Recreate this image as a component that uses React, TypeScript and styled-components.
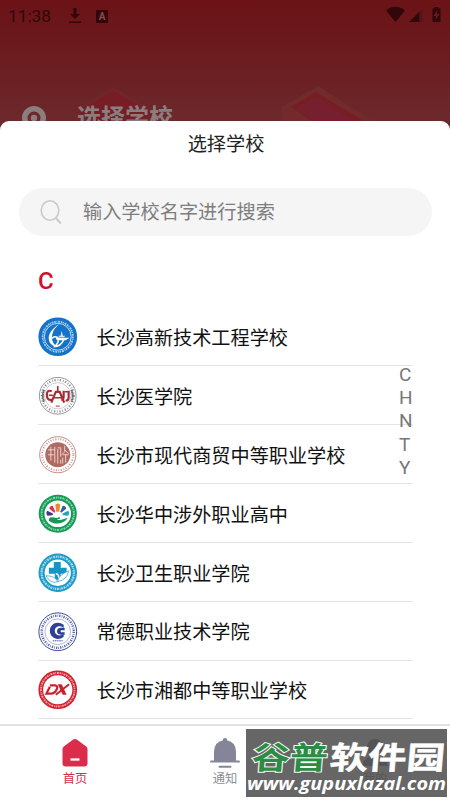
import { FC, ReactNode } from "react";
import styled, { createGlobalStyle } from "styled-components";

const GlobalStyle = createGlobalStyle`
    * {
        box-sizing: border-box;
    }

    body {
        margin: 0;
        background: #fff;
        font-family: Roboto, "Noto Sans CJK SC", sans-serif;
    }
`;

const letters = ["C", "H", "N", "T", "Y"];

interface RingProps {
    color: string;
    radius?: number;
    width?: number;
    dash?: string;
}

// The tiny lettering that runs around the edge of a school seal
const SealLettering: FC<RingProps> = ({
    color,
    radius = 16,
    width = 2.4,
    dash = "1.6 .7 .8 .9 2 .8",
}) => (
    <circle
        cx="20"
        cy="20"
        r={radius}
        fill="none"
        stroke={color}
        strokeWidth={width}
        strokeDasharray={dash}
    />
);

const EngineeringSeal = () => (
    <Seal viewBox="0 0 40 40">
        <circle cx="20" cy="20" r="19.6" fill="#1472c8" />
        <circle cx="20" cy="20" r="13.6" fill="none" stroke="#d5e8f8" strokeWidth=".9" />
        <SealLettering color="#a9cff0" radius={15.3} width={1.8} />
        <path d="M22 7C14 11 10 18 11 23c1 5 5 7 8 7-5-4-6-9-4-14 1-4 4-7 7-9z" fill="#fff" />
        <path
            d="M12 24c2-4 6-5 8-3 2 3-1 8-4 9 5 0 8-2 10-7"
            fill="none"
            stroke="#fff"
            strokeWidth="1.6"
        />
        <path d="M18 21h14l-4 2.500H19z" fill="#fff" />
        <path d="M24 14l1.200 5h2.300l-1 1.500h-5l-1-1.500h2.300z" fill="#d5e8f8" />
    </Seal>
);

const MedicalSeal = () => (
    <Seal viewBox="0 0 40 40">
        <circle cx="20" cy="20" r="18.6" fill="#fff" stroke="#88898f" strokeWidth=".9" />
        <SealLettering color="#86888f" radius={16} dash="1.2 2 .7 1.6" />
        <path
            d="M6.200 14a15 15 0 000 12M33.800 14a15 15 0 010 12"
            fill="none"
            stroke="#5d6068"
            strokeWidth="2"
            strokeDasharray="1.500 .4"
        />
        <circle cx="20" cy="20" r="13.3" fill="none" stroke="#aaa" strokeWidth=".6" />
        <path
            d="M14 15.500q-5-2-5 3.500 0 6 5 5M26 15v6q0 3-2.500 3M31 15v7q0 3-3 3M13.500 27l4.500-11h4l4.500 11"
            fill="none"
            stroke="#a82c34"
            strokeWidth="2.2"
        />
        <path d="M20 10v6M16 22h8M11 19.500h4M27 16h4" stroke="#a82c34" strokeWidth="1.600" />
        <path d="M18 30.500h4" stroke="#a82c34" />
    </Seal>
);

const CommerceSeal = () => (
    <Seal viewBox="0 0 40 40">
        <circle cx="20" cy="20" r="18.300" fill="#fff" stroke="#c48982" strokeWidth="1" />
        <SealLettering color="#c59a94" radius={15.8} width={2} dash="1.200 1.500 .8 1.600" />
        <circle cx="20" cy="20" r="12.700" fill="#b06a62" />
        <path
            d="M10 15h7M10 20h6M13 12v14M17 12v16M20 13h3v9M20 14v15M23 25v4M27 11v6l-3 3M27 15l4 4M25 20h6M28 20v8M25 23v6"
            fill="none"
            stroke="#efdcd8"
            strokeWidth=".9"
        />
    </Seal>
);

const ForeignAffairsSeal = () => (
    <Seal viewBox="0 0 40 40">
        <circle cx="20" cy="20" r="19.3" fill="#119b55" />
        <SealLettering color="#8fd0aa" radius={16.4} width={2} />
        <circle cx="20" cy="20" r="13.500" fill="#fff" />
        <path d="M18.500 18L17.500 11q2.500-3 5 0L21.500 18z" fill="#ee8b27" />
        <path d="M17.500 18l-2.500-6q-3.500 0-3.500 3l5 4z" fill="#d8344d" />
        <path d="M22.500 18l2.500-6q3.500 0 3.500 3l-5 4z" fill="#315eac" />
        <path d="M15.500 20l-6-3q-2 2 0 5l5-.500z" fill="#493586" />
        <path d="M24.500 20l6-3q2 2 0 5l-5-.500z" fill="#20a6b5" />
        <path d="M11 25c3-3 6 0 9-1 2-1 3 0 2 1l-3 1c4 1 7-1 11-2-3 6-13 8-19 3z" fill="#119b55" />
    </Seal>
);

const HealthSeal = () => (
    <Seal viewBox="0 0 40 40">
        <circle cx="20" cy="20" r="19.5" fill="#1c9ac9" />
        <SealLettering color="#a8dced" radius={16.4} width={2.300} />
        <circle cx="20" cy="20" r="13.300" fill="#fff" />
        <path d="M16 9h7v6h6v6h-6v6h-6v-6h-6v-6h5z" fill="#1694c5" />
        <path d="M8 23q9 0 12 6-7 3-12-6zM20 29q0-6 11-11-1 9-11 11z" fill="#fff" stroke="#3aa6d0" strokeWidth=".8" />
        <path d="M18 21q3 0 3 4" fill="none" stroke="#fff" strokeWidth="1.500" />
    </Seal>
);

const ChangdeSeal = () => (
    <Seal viewBox="0 0 40 40">
        <circle cx="20" cy="20" r="19.100" fill="#fff" stroke="#39479a" strokeWidth="1" />
        <SealLettering color="#5763aa" radius={16.2} width={2.500} dash="1.300 1.200 .7 1.100" />
        <circle cx="20" cy="20" r="13" fill="none" stroke="#7983bc" strokeWidth=".6" />
        <path
            d="M26 13c-6-5-14-1-14 6 0 7 8 11 14 6v-3c-3 3-9 2-9-3s6-6 9-3z"
            fill="#303f98"
        />
        <path d="M27 16v2.500h-4v2h4V23h-4c-5 0-5-7 0-7z" fill="#303f98" />
        <path d="M15 29h10" stroke="#7983bc" strokeWidth="1.500" strokeDasharray="1.500 .7" />
    </Seal>
);

const XiangduSeal = () => (
    <Seal viewBox="0 0 40 40">
        <circle cx="20" cy="20" r="19.6" fill="#d4202d" />
        <SealLettering color="#eea4a8" radius={17} width={1.900} />
        <circle cx="20" cy="20" r="14.800" fill="#fff" />
        <path
            d="M12 15.500h5.500q3 .5 1.500 4-2 4.500-6 4.500H8.500l3.500-7"
            fill="none"
            stroke="#cf1f2c"
            strokeWidth="2.200"
        />
        <path d="M20 14.500h4l5 10.500h-4z" fill="#cf1f2c" />
        <path d="M31.500 14.500L18 25" stroke="#cf1f2c" strokeWidth="2" />
    </Seal>
);

const schools: { name: string; seal: ReactNode }[] = [
    { name: "长沙高新技术工程学校", seal: <EngineeringSeal /> },
    { name: "长沙医学院", seal: <MedicalSeal /> },
    { name: "长沙市现代商贸中等职业学校", seal: <CommerceSeal /> },
    { name: "长沙华中涉外职业高中", seal: <ForeignAffairsSeal /> },
    { name: "长沙卫生职业学院", seal: <HealthSeal /> },
    { name: "常德职业技术学院", seal: <ChangdeSeal /> },
    { name: "长沙市湘都中等职业学校", seal: <XiangduSeal /> },
];

const StatusBar = () => (
    <StatusRow>
        <Clock>11:38</Clock>
        <svg width="14" height="18" viewBox="0 0 14 18">
            <path d="M5.500 1h3v6H12l-5 5-5-5h3.500zM1 14.500h12V16H1z" fill="#320709" />
        </svg>
        <LanguageBadge>A</LanguageBadge>
        <StatusIcons width="60" height="18" viewBox="0 0 60 18">
            <path d="M0 4.500C6-.5 13-.5 19 4.500L9.500 16z" fill="#320709" />
            <path d="M23 16L33.500 5.500V16z" fill="#320709" />
            <path d="M33.500 5.500L36.500 2.500V16h-3z" fill="#54151a" />
            <path d="M46.500 2.500h2V1h4v1.500h2V16h-8z" fill="#320709" />
            <path d="M51.500 4l-4 6H50l-.5 4 4-6H51z" fill="#6a1b1f" />
        </StatusIcons>
    </StatusRow>
);

const App: FC = () => {
    return (
        <Screen>
            <GlobalStyle />
            <Backdrop>
                <BackdropArt viewBox="0 0 450 131">
                    <path d="M72 111l41-24 48 27-42 17z" fill="#712529" />
                    <path d="M78 112l35-21 40 23-33 17z" fill="#761d26" />
                    <path d="M282 107l36-21 53 34v11h-89z" fill="#732a2d" />
                    <path d="M291 107l25-15 46 28-12 11h-24z" fill="#761f22" />
                    <path d="M296 109l20-12 39 24-8 10h-18z" fill="#76202f" />
                </BackdropArt>
                <StatusBar />
                <CurrentSchool>
                    <svg width="24" height="30" viewBox="0 0 24 30">
                        <path
                            fillRule="evenodd"
                            d="M12 0a12 12 0 0112 12c0 8-12 18-12 18S0 20 0 12A12 12 0 0112 0zm0 5.500a6.500 6.500 0 100 13 6.500 6.500 0 000-13z"
                            fill="#8a7e7f"
                        />
                        <circle cx="12" cy="12" r="3.200" fill="#8a7e7f" />
                    </svg>
                    选择学校
                </CurrentSchool>
            </Backdrop>
            <Sheet>
                <SheetTitle>选择学校</SheetTitle>
                <SearchBox>
                    <svg width="24" height="26" viewBox="0 0 24 26" fill="none" stroke="#cbcbcb">
                        <ellipse cx="11" cy="11.500" rx="8.800" ry="9.700" strokeWidth="1.600" />
                        <path d="M17.300 19.500l4.500 5" strokeWidth="2" />
                    </svg>
                    输入学校名字进行搜索
                </SearchBox>
                <SectionLetter>C</SectionLetter>
                <SchoolList>
                    {schools.map(({ name, seal }) => (
                        <SchoolRow key={name}>
                            {seal}
                            {name}
                        </SchoolRow>
                    ))}
                    <LetterIndex>
                        {letters.map((letter) => (
                            <span key={letter}>{letter}</span>
                        ))}
                    </LetterIndex>
                </SchoolList>
            </Sheet>
            <TabBar>
                <Tab $color="#d92e4b">
                    <svg width="30" height="30" viewBox="0 0 30 30">
                        <path
                            d="M13.200 1.600q1.800-1.200 3.600 0l9.400 7q1.300 1 1.300 2.600v14q0 3.300-3.300 3.300H5.800q-3.300 0-3.300-3.300v-14q0-1.600 1.300-2.600z"
                            fill="#dc2c4b"
                        />
                        <path d="M10.500 21.500h9" stroke="#fff" strokeWidth="2.300" />
                    </svg>
                    首页
                </Tab>
                <Tab $color="#8e8e94">
                    <svg width="30" height="30" viewBox="0 0 30 30">
                        <path
                            d="M13 1q2-2 4 0v1.200q9 2 9 11.300v9h3q1 0 1 2H0q0-2 1-2h3v-9q0-9.300 9-11.300z"
                            fill="#85859a"
                        />
                        <path d="M9.500 28.800h11" stroke="#85859a" strokeWidth="2" strokeLinecap="round" />
                    </svg>
                    通知
                </Tab>
                <Tab $color="#8e8e94">
                    <svg width="30" height="30" viewBox="0 0 30 30">
                        <circle cx="15" cy="9" r="8" fill="#85859a" />
                        <path d="M2 28q2-10 13-10t13 10z" fill="#85859a" />
                    </svg>
                    我的
                </Tab>
            </TabBar>
            <Watermark viewBox="0 0 201 68">
                <g transform="translate(5 39.500) skewX(-5) scale(1 .82)">
                    <text
                        textLength="76"
                        lengthAdjust="spacingAndGlyphs"
                        fontSize="38"
                        fontWeight="700"
                        fill="#2c8c43"
                        stroke="#f4f7f4"
                        strokeWidth="2.400"
                        paintOrder="stroke"
                    >
                        谷普
                    </text>
                    <text
                        x="78"
                        textLength="115"
                        lengthAdjust="spacingAndGlyphs"
                        fontSize="38"
                        fontWeight="700"
                        fill="#fff"
                        stroke="#fff"
                        strokeWidth=".6"
                    >
                        软件园
                    </text>
                </g>
                <WatermarkUrl x="1" y="60.500" textLength="199" lengthAdjust="spacingAndGlyphs">
                    www.gupuxlazal.com
                </WatermarkUrl>
            </Watermark>
        </Screen>
    );
};

export default App;

const Screen = styled.div`
    position: relative;
    display: flex;
    flex-direction: column;
    width: 450px;
    height: 800px;
    overflow: hidden;
`;

const Backdrop = styled.header`
    position: relative;
    flex: none;
    height: 131px;
    overflow: hidden;
    background: linear-gradient(#6b1317, #6b1a1d 35%, #6c2b2e);
`;

const BackdropArt = styled.svg`
    position: absolute;
    inset: 0;
`;

const StatusRow = styled.div`
    position: relative;
    display: flex;
    align-items: center;
    height: 32px;
    padding: 0 4px 0 8px;
    color: #320709;
`;

const Clock = styled.span`
    width: 60px;
    font-size: 17.300px;
`;

const LanguageBadge = styled.span`
    width: 12px;
    height: 13px;
    margin-left: 14px;
    border-radius: 1px;
    background: #320709;
    color: #8b4a4c;
    font-size: 10px;
    font-weight: 700;
    line-height: 13px;
    text-align: center;
`;

const StatusIcons = styled.svg`
    margin-left: auto;
    transform: translateY(-1px);
`;

const CurrentSchool = styled.div`
    position: relative;
    display: flex;
    gap: 31px;
    padding: 74px 0 0 22px;
    color: #8a7e7f;
    font-size: 24px;
    font-weight: 700;
    line-height: 25px;
`;

const Sheet = styled.main`
    position: relative;
    display: flex;
    flex: 1;
    flex-direction: column;
    margin-top: -10px;
    border-radius: 9px 9px 0 0;
    background: #fff;
`;

const SheetTitle = styled.h1`
    margin: 0;
    padding-top: 10px;
    padding-left: 2px;
    color: #222;
    font-size: 19.200px;
    font-weight: 400;
    line-height: 28px;
    text-align: center;
`;

const SearchBox = styled.div`
    display: flex;
    align-items: center;
    gap: 20px;
    height: 48px;
    margin: 29px 18px 0 19px;
    padding: 0 20px;
    border-radius: 24px;
    background: #f5f5f5;
    color: #7e7e7e;
    font-size: 19.200px;
    line-height: 47px;
`;

const SectionLetter = styled.h2`
    margin: 0;
    padding: 29px 0 0 38px;
    color: #d0102f;
    font-size: 24px;
    font-weight: 500;
    line-height: 32px;
`;

const SchoolList = styled.div`
    position: relative;
    margin: 10.500px 37px 0 38px;
`;

const SchoolRow = styled.div`
    display: flex;
    align-items: center;
    gap: 19px;
    height: 58.850px;
    padding-top: 1.500px;
    border-bottom: 1.500px solid #e4e4e4;
    color: #111;
    font-size: 19.150px;
`;

const Seal = styled.svg`
    flex: none;
    width: 39.500px;
    height: 39.500px;
`;

const LetterIndex = styled.div`
    position: absolute;
    top: 55.500px;
    right: 0;
    display: flex;
    flex-direction: column;
    width: 14px;
    color: #777;
    font-size: 19px;
    line-height: 23.200px;
`;

const TabBar = styled.nav`
    display: flex;
    flex: none;
    height: 76px;
    border-top: 2px solid #e2e2e2;
    background: #fff;
`;

const Tab = styled.div<{ $color: string }>`
    display: flex;
    flex: 1;
    flex-direction: column;
    align-items: center;
    padding-top: 12px;
    color: ${({ $color }) => $color};
    font-size: 12.300px;
    line-height: 23px;
`;

const Watermark = styled.svg`
    position: absolute;
    top: 729px;
    left: 246px;
    width: 201px;
    height: 68px;
    background: rgba(75, 75, 75, 0.85);
    font-family: "Noto Sans CJK SC", sans-serif;
`;

const WatermarkUrl = styled.text`
    fill: #fff;
    font-family: "Open Sans", sans-serif;
    font-size: 18.500px;
    font-style: italic;
    font-weight: 700;
`;
